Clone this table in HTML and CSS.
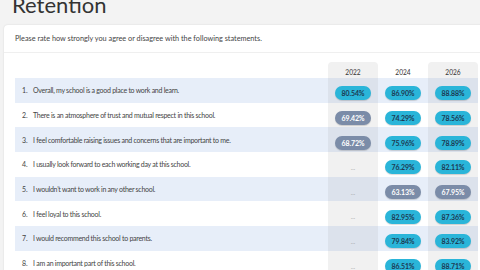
FILE: index.html
```html
<!DOCTYPE html>
<html>
<head>
<meta charset="utf-8">
<link rel="stylesheet" href="styles.css">
</head>
<body>
<div class="page">
  <h1 class="title">Retention</h1>
  <div class="card">
    <div class="card-head">Please rate how strongly you agree or disagree with the following statements.</div>
    <div class="card-body">
      <table class="grid">
        <thead>
          <tr>
            <th class="q"></th>
            <th class="yr shade top">2022</th>
            <th class="yr">2024</th>
            <th class="yr shade top">2026</th>
          </tr>
        </thead>
        <tbody>
          <tr class="band">
            <td class="q"><span class="n">1.</span>Overall, my school is a good place to work and learn.</td>
            <td class="shade"><span class="pill hi">80.54%</span></td>
            <td><span class="pill hi">86.90%</span></td>
            <td class="shade"><span class="pill hi">88.88%</span></td>
          </tr>
          <tr>
            <td class="q"><span class="n">2.</span>There is an atmosphere of trust and mutual respect in this school.</td>
            <td class="shade"><span class="pill lo">69.42%</span></td>
            <td><span class="pill hi">74.29%</span></td>
            <td class="shade"><span class="pill hi">78.56%</span></td>
          </tr>
          <tr class="band">
            <td class="q"><span class="n">3.</span>I feel comfortable raising issues and concerns that are important to me.</td>
            <td class="shade"><span class="pill lo">68.72%</span></td>
            <td><span class="pill hi">75.96%</span></td>
            <td class="shade"><span class="pill hi">78.89%</span></td>
          </tr>
          <tr>
            <td class="q"><span class="n">4.</span>I usually look forward to each working day at this school.</td>
            <td class="shade"><span class="dash">--</span></td>
            <td><span class="pill hi">76.29%</span></td>
            <td class="shade"><span class="pill hi">82.11%</span></td>
          </tr>
          <tr class="band">
            <td class="q"><span class="n">5.</span>I wouldn’t want to work in any other school.</td>
            <td class="shade"><span class="dash">--</span></td>
            <td><span class="pill lo">63.13%</span></td>
            <td class="shade"><span class="pill lo">67.95%</span></td>
          </tr>
          <tr>
            <td class="q"><span class="n">6.</span>I feel loyal to this school.</td>
            <td class="shade"><span class="dash">--</span></td>
            <td><span class="pill hi">82.95%</span></td>
            <td class="shade"><span class="pill hi">87.36%</span></td>
          </tr>
          <tr class="band">
            <td class="q"><span class="n">7.</span>I would recommend this school to parents.</td>
            <td class="shade"><span class="dash">--</span></td>
            <td><span class="pill hi">79.84%</span></td>
            <td class="shade"><span class="pill hi">83.92%</span></td>
          </tr>
          <tr>
            <td class="q"><span class="n">8.</span>I am an important part of this school.</td>
            <td class="shade"><span class="dash">--</span></td>
            <td><span class="pill hi">86.51%</span></td>
            <td class="shade"><span class="pill hi">88.71%</span></td>
          </tr>
        </tbody>
      </table>
    </div>
  </div>
</div>
</body>
</html>
```
FILE: styles.css
```css
html, body {
  margin: 0;
  padding: 0;
  background: #f3f3f3;
  font-family: Lato, "Open Sans", sans-serif;
  overflow: hidden;
}
.page {
  width: 496px;
  padding-left: 4px;
}
.title {
  margin: -6px 0 9px 8px;
  font-size: 22px;
  line-height: 22px;
  font-weight: 400;
  color: #333;
}
.card {
  background: #fff;
  border-radius: 4px;
  box-shadow: 0 0 2px rgba(0,0,0,0.12);
}
.card-head {
  height: 27px;
  line-height: 27px;
  padding: 0 11px;
  font-size: 7.3px;
  color: #444;
  border-bottom: 1px solid #efefef;
}
.card-body {
  padding: 9px 11px 0 11px;
}
.grid {
  border-collapse: collapse;
  width: 463px;
  table-layout: fixed;
}
.grid th, .grid td {
  padding: 0;
}
.grid th.q {
  width: auto;
}
.grid th.yr {
  width: 50px;
  height: 13px;
  padding-top: 3px;
  font-size: 6.6px;
  font-weight: 400;
  color: #333;
  text-align: center;
  vertical-align: middle;
}
.grid th.top {
  border-radius: 4px 4px 0 0;
}
.grid td {
  height: 24.7px;
  text-align: center;
  vertical-align: middle;
}
.grid td.q {
  text-align: left;
  font-size: 7px;
  letter-spacing: -0.27px;
  color: #444;
  padding-left: 7px;
  white-space: nowrap;
}
.n {
  display: inline-block;
  width: 11px;
  letter-spacing: 0;
}
.band td {
  background: #e7eef9;
}
.shade {
  background: #f1f1f1;
}
.band td.shade {
  background: #dce2ec;
}
.pill {
  display: inline-block;
  width: 36px;
  height: 14px;
  line-height: 14px;
  border-radius: 7px;
  font-size: 7px;
  font-weight: 700;
  letter-spacing: -0.1px;
  box-shadow: 0 1px 1px rgba(0,0,0,0.15);
}
.pill.hi {
  background: #2ab5d9;
  color: #1d3a52;
}
.pill.lo {
  background: #7b8ca8;
  color: #fff;
}
.dash {
  font-size: 6px;
  color: #999;
}
```
